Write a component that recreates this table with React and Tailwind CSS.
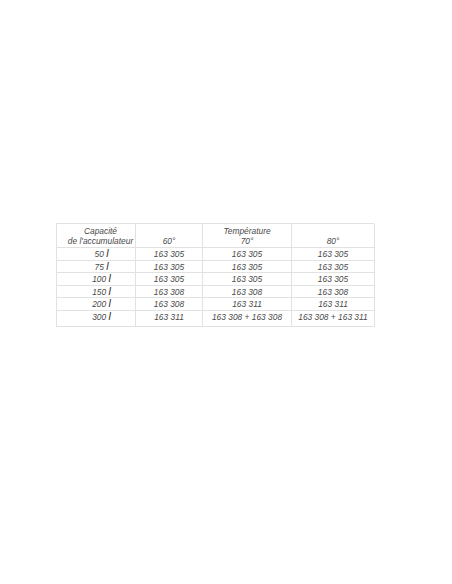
import React from "react";

const rows = [
  ["50", "163 305", "163 305", "163 305"],
  ["75", "163 305", "163 305", "163 305"],
  ["100", "163 305", "163 305", "163 305"],
  ["150", "163 308", "163 308", "163 308"],
  ["200", "163 308", "163 311", "163 311"],
  ["300", "163 311", "163 308 + 163 308", "163 308 + 163 311"],
];

const cell = "border-r border-b border-[#e2e2e2] text-center";

export default function App() {
  return (
    <div className="w-[452px] h-[584px] bg-white pt-[223px] pl-[56px] font-['Liberation_Sans',Arial,sans-serif] italic text-[8.4px] text-[#4a4a4a]">
      <div className="grid grid-cols-[79px_67px_89px_83px] w-[318px] border-t border-l border-[#e2e2e2]">
        {/* Header */}
        <div className={`${cell} h-[24px] pt-[2px] pl-[9px] leading-[10px]`}>
          Capacité
          <br />
          de l'accumulateur
        </div>
        <div className={`${cell} h-[24px] pt-[12px] leading-[10px]`}>60°</div>
        <div className={`${cell} h-[24px] pt-[2px] leading-[10px]`}>
          Température
          <br />
          70°
        </div>
        <div className={`${cell} h-[24px] pt-[12px] leading-[10px]`}>80°</div>

        {/* Rows */}
        {rows.map((r, i) => {
          const h = i === rows.length - 1 ? "h-[16.5px]" : "h-[12.5px]";
          return (
            <React.Fragment key={r[0]}>
              <div className={`${cell} ${h} leading-[12.5px] pl-[11px]`}>
                {r[0]} <span className="inline-block h-[8px] leading-[8px] text-[10.5px] font-medium text-[#2a2a2a]">l</span>
              </div>
              <div className={`${cell} ${h} leading-[12.5px]`}>{r[1]}</div>
              <div className={`${cell} ${h} leading-[12.5px]`}>{r[2]}</div>
              <div className={`${cell} ${h} leading-[12.5px]`}>{r[3]}</div>
            </React.Fragment>
          );
        })}
      </div>
    </div>
  );
}
